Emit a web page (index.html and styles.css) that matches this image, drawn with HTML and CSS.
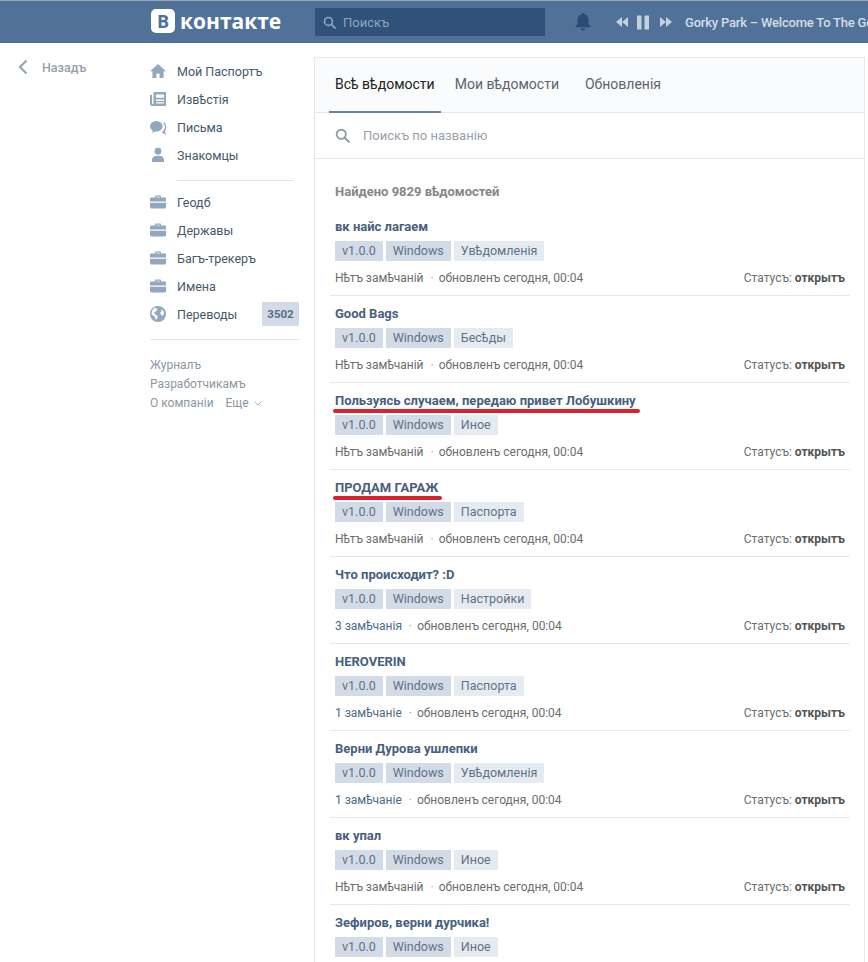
FILE: index.html
```html
<!DOCTYPE html>
<html lang="ru">
<head>
    <meta charset="UTF-8">
    <meta name="viewport" content="width=device-width, initial-scale=1.0">
    <title>Всѣ вѣдомости</title>
    <link rel="stylesheet" href="styles.css">
</head>
<body>
    <svg class="sprite" width="0" height="0">
        <symbol id="i-search" viewBox="0 0 16 16"><circle cx="6.7" cy="6.7" r="4.9" fill="none" stroke="currentColor" stroke-width="2"/><path d="M10.3 10.3l4.4 4.4" stroke="currentColor" stroke-width="2.2" stroke-linecap="round"/></symbol>
        <symbol id="i-home" viewBox="0 0 16 16"><path d="M8 1L0 8.2h2.4V15h4v-4.4h3.2V15h4V8.2H16z" fill="currentColor"/></symbol>
        <symbol id="i-news" viewBox="0 0 16 16"><path d="M3.5 1H16v14H2.500A2.500 2.500 0 0 1 0 12.500V4h2v8.400c0 .4.300.7.800.7s.7-.3.7-.7zM6 3.400v3.400h8V3.400zm0 5.200v1.300h8V8.600zm0 2.600v1.300h8v-1.300z" fill="currentColor" fill-rule="evenodd"/></symbol>
        <symbol id="i-chat" viewBox="0 0 16 16"><ellipse cx="6.300" cy="7.300" rx="6.300" ry="5.200" fill="currentColor"/><path d="M3 11l-.8 3 3.800-2z" fill="currentColor"/><path d="M13.600 3.800c2.600 2.200 2.800 5.800 .4 8l.8 2.400-2.600-1.400" fill="none" stroke="currentColor" stroke-width="1.400"/></symbol>
        <symbol id="i-user" viewBox="0 0 16 16"><circle cx="8" cy="4.200" r="3.400" fill="currentColor"/><path d="M2 15v-2.500c0-2.300 2.500-3.700 6-3.700s6 1.400 6 3.700V15z" fill="currentColor"/></symbol>
        <symbol id="i-case" viewBox="0 0 16 16"><path d="M5 3.500V2.300C5 1.800 5.400 1.500 5.900 1.500h4.200c.5 0 .9.300.9.800v1.200h3.500c.8 0 1.500.5 1.500 1.300V7.500H0V4.800C0 4 .7 3.500 1.500 3.500zm1.300 0h3.400V2.700H6.300zM0 8.700h16v4.300c0 .8-.7 1.500-1.500 1.500h-13C.7 14.500 0 13.800 0 13z" fill="currentColor" fill-rule="evenodd"/></symbol>
        <symbol id="i-globe" viewBox="0 0 16 16"><circle cx="8" cy="8" r="8" fill="currentColor"/><path d="M4.500 1.700L7.300 3 6.500 5 4 6.300 5.500 9l2.200.6-.5 3.200-1.500 1-1.200-3.400L1.500 8.200C1.700 5.500 2.700 3.200 4.500 1.700zM11 3.500l2 .8 1 3.500-1.200 2-1.800-.8-.8-2.500 1.400-1z" fill="#fff"/></symbol>
    </svg>

    <header class="topbar">
        <div class="topbar-inner">
            <a class="logo"><span class="logo-mark">В</span><span class="logo-text">контакте</span></a>
            <div class="top-search">
                <svg class="top-search-icon"><use href="#i-search"/></svg>
                <span>Поискъ</span>
            </div>
            <svg class="bell" viewBox="0 0 16 18"><path d="M8 0c.8 0 1.300.5 1.400 1.300C12 2 13.500 4.200 13.500 7v4l2 2.500v.8H.5v-.8l2-2.500V7c0-2.800 1.500-5 4.100-5.700C6.700.5 7.200 0 8 0zM5.800 15.300h4.400C10 16.800 9.100 17.500 8 17.500s-2-.7-2.200-2.200z" fill="#2a4b73"/></svg>
            <div class="player">
                <svg class="player-btn" viewBox="0 0 12 10"><path d="M6 0v10L0 5zM12 0v10L6 5z" fill="currentColor"/></svg>
                <svg class="player-pause" viewBox="0 0 12 14"><rect width="4.500" height="14" rx=".5" fill="currentColor"/><rect x="7.500" width="4.500" height="14" rx=".5" fill="currentColor"/></svg>
                <svg class="player-btn" viewBox="0 0 12 10"><path d="M0 0v10l6-5zM6 0v10l6-5z" fill="currentColor"/></svg>
                <span class="track">Gorky Park – Welcome To The Gorky Park</span>
            </div>
        </div>
    </header>

    <div class="page">
        <aside class="back">
            <svg class="back-arrow" viewBox="0 0 10 16"><path d="M8.500 1.500L2 8l6.500 6.500" fill="none" stroke="currentColor" stroke-width="2.200"/></svg>
            <span>Назадъ</span>
        </aside>

        <nav class="side">
            <a class="side-item"><svg><use href="#i-home"/></svg>Мой Паспортъ</a>
            <a class="side-item"><svg><use href="#i-news"/></svg>Извѣстія</a>
            <a class="side-item"><svg><use href="#i-chat"/></svg>Письма</a>
            <a class="side-item"><svg><use href="#i-user"/></svg>Знакомцы</a>
            <div class="side-sep side-sep-short"></div>
            <a class="side-item"><svg><use href="#i-case"/></svg>Геодб</a>
            <a class="side-item"><svg><use href="#i-case"/></svg>Державы</a>
            <a class="side-item"><svg><use href="#i-case"/></svg>Багъ-трекеръ</a>
            <a class="side-item"><svg><use href="#i-case"/></svg>Имена</a>
            <a class="side-item"><svg><use href="#i-globe"/></svg>Переводы<span class="badge">3502</span></a>
            <div class="side-sep"></div>
            <div class="side-foot">
                <a>Журналъ</a>
                <a>Разработчикамъ</a>
                <a>О компаніи <span class="more">Еще <svg viewBox="0 0 8 5"><path d="M.7.7L4 4l3.300-3.300" fill="none" stroke="currentColor"/></svg></span></a>
            </div>
        </nav>

        <main class="card">
            <div class="tabs">
                <a class="tab tab-active">Всѣ вѣдомости</a>
                <a class="tab tab-mine">Мои вѣдомости</a>
                <a class="tab">Обновленія</a>
            </div>
            <div class="filter">
                <svg><use href="#i-search"/></svg>
                <span>Поискъ по названію</span>
            </div>
            <div class="list">
                <div class="found">Найдено 9829 вѣдомостей</div>

                <div class="report">
                    <a class="report-title">вк найс лагаем</a>
                    <div class="tags"><span class="tag">v1.0.0</span><span class="tag">Windows</span><span class="tag tag-light">Увѣдомленія</span></div>
                    <div class="meta"><span>Нѣтъ замѣчаній</span><span class="dot">·</span><span>обновленъ сегодня, 00:04</span><span class="status">Статусъ: <b>открытъ</b></span></div>
                </div>
                <div class="report">
                    <a class="report-title">Good Bags</a>
                    <div class="tags"><span class="tag">v1.0.0</span><span class="tag">Windows</span><span class="tag tag-light">Бесѣды</span></div>
                    <div class="meta"><span>Нѣтъ замѣчаній</span><span class="dot">·</span><span>обновленъ сегодня, 00:04</span><span class="status">Статусъ: <b>открытъ</b></span></div>
                </div>
                <div class="report">
                    <a class="report-title marked">Пользуясь случаем, передаю привет Лобушкину</a>
                    <div class="tags"><span class="tag">v1.0.0</span><span class="tag">Windows</span><span class="tag tag-light">Иное</span></div>
                    <div class="meta"><span>Нѣтъ замѣчаній</span><span class="dot">·</span><span>обновленъ сегодня, 00:04</span><span class="status">Статусъ: <b>открытъ</b></span></div>
                </div>
                <div class="report">
                    <a class="report-title marked">ПРОДАМ ГАРАЖ</a>
                    <div class="tags"><span class="tag">v1.0.0</span><span class="tag">Windows</span><span class="tag tag-light">Паспорта</span></div>
                    <div class="meta"><span>Нѣтъ замѣчаній</span><span class="dot">·</span><span>обновленъ сегодня, 00:04</span><span class="status">Статусъ: <b>открытъ</b></span></div>
                </div>
                <div class="report">
                    <a class="report-title">Что происходит? :D</a>
                    <div class="tags"><span class="tag">v1.0.0</span><span class="tag">Windows</span><span class="tag tag-light">Настройки</span></div>
                    <div class="meta"><span class="comments">3 замѣчанія</span><span class="dot">·</span><span>обновленъ сегодня, 00:04</span><span class="status">Статусъ: <b>открытъ</b></span></div>
                </div>
                <div class="report">
                    <a class="report-title">HEROVERIN</a>
                    <div class="tags"><span class="tag">v1.0.0</span><span class="tag">Windows</span><span class="tag tag-light">Паспорта</span></div>
                    <div class="meta"><span class="comments">1 замѣчаніе</span><span class="dot">·</span><span>обновленъ сегодня, 00:04</span><span class="status">Статусъ: <b>открытъ</b></span></div>
                </div>
                <div class="report">
                    <a class="report-title">Верни Дурова ушлепки</a>
                    <div class="tags"><span class="tag">v1.0.0</span><span class="tag">Windows</span><span class="tag tag-light">Увѣдомленія</span></div>
                    <div class="meta"><span class="comments">1 замѣчаніе</span><span class="dot">·</span><span>обновленъ сегодня, 00:04</span><span class="status">Статусъ: <b>открытъ</b></span></div>
                </div>
                <div class="report">
                    <a class="report-title">вк упал</a>
                    <div class="tags"><span class="tag">v1.0.0</span><span class="tag">Windows</span><span class="tag tag-light">Иное</span></div>
                    <div class="meta"><span>Нѣтъ замѣчаній</span><span class="dot">·</span><span>обновленъ сегодня, 00:04</span><span class="status">Статусъ: <b>открытъ</b></span></div>
                </div>
                <div class="report">
                    <a class="report-title">Зефиров, верни дурчика!</a>
                    <div class="tags"><span class="tag">v1.0.0</span><span class="tag">Windows</span><span class="tag tag-light">Иное</span></div>
                </div>
            </div>
        </main>
    </div>
</body>
</html>
```

FILE: styles.css
```css
html, body {
    height: 962px;
    overflow: hidden;
}
body {
    margin: 0;
    background-color: #fff;
    font-family: Roboto, "Liberation Sans", sans-serif;
    font-size: 13px;
    color: #656565;
}
.sprite {
    position: absolute;
}

/* top bar */
.topbar {
    height: 42px;
    background-color: #507299;
    border-top: 1px solid #9aa6b6;
    overflow: hidden;
}
.topbar-inner {
    display: flex;
    align-items: center;
    height: 42px;
    padding-left: 151px;
    white-space: nowrap;
}
.topbar-inner > * {
    flex: none;
}
.logo {
    display: flex;
    align-items: center;
    width: 164px;
    margin-top: -3px;
}
.logo-mark {
    width: 24px;
    height: 24px;
    margin-right: 5px;
    background-color: #fff;
    border-radius: 5px;
    color: #507299;
    font: bold 18px/24px "Open Sans", sans-serif;
    text-align: center;
}
.logo-text {
    font: bold 21px/24px "Open Sans", sans-serif;
    color: #fff;
}
.top-search {
    display: flex;
    align-items: center;
    width: 230px;
    height: 28px;
    background-color: #30527a;
    color: #8fa5be;
}
.top-search-icon {
    width: 13px;
    height: 13px;
    margin: 0 7px 0 8px;
    color: #8fa5be;
}
.bell {
    width: 16px;
    height: 18px;
    margin-left: 30px;
}
.player {
    display: flex;
    align-items: center;
    margin-left: 25px;
    color: #c5d0de;
}
.player-btn {
    width: 12px;
    height: 10px;
}
.player-pause {
    width: 12px;
    height: 15px;
    margin: 0 11px 0 9px;
}
.track {
    margin-left: 13px;
    font-size: 13px;
    font-weight: 500;
    letter-spacing: -.2px;
    color: #d3dce7;
}

/* page columns */
.page {
    display: flex;
    align-items: flex-start;
}
.back {
    display: flex;
    align-items: center;
    width: 150px;
    padding-top: 16px;
    box-sizing: border-box;
    padding-left: 18px;
    font-size: 12.5px;
    font-weight: 500;
    color: #939fae;
}
.back-arrow {
    width: 10px;
    height: 16px;
    margin-right: 14px;
    color: #99a6b6;
}

/* left menu */
.side {
    width: 149px;
    margin-right: 15px;
    padding-top: 14px;
}
.side-item {
    display: flex;
    align-items: center;
    height: 28px;
    font-size: 12.5px;
    color: #47586c;
}
.side-item svg {
    width: 16px;
    height: 16px;
    margin-right: 11px;
    color: #93a7bd;
}
.badge {
    margin-left: auto;
    width: 37px;
    height: 24px;
    background-color: #d3dbe6;
    color: #5a6d84;
    font-size: 11.5px;
    font-weight: bold;
    line-height: 24px;
    text-align: center;
}
.side-sep {
    height: 1px;
    margin: 11px 0 16px;
    background-color: #e1e5eb;
}
.side-sep-short {
    margin: 11px 5px 7px 27px;
}
.side-foot {
    font-size: 12px;
    line-height: 19px;
    color: #8d97a3;
}
.side-foot a {
    display: block;
}
.more {
    margin-left: 9px;
}
.more svg {
    width: 8px;
    height: 5px;
    margin-left: 2px;
    vertical-align: 1px;
    color: #a9b4c0;
}

/* main card */
.card {
    width: 551px;
    height: 905px;
    box-sizing: border-box;
    border: 1px solid #e7e8ec;
    border-bottom: none;
    margin-top: 14px;
    overflow: hidden;
}
.tabs {
    display: flex;
    height: 55px;
    padding-left: 14px;
    background-color: #fafbfc;
    border-bottom: 1px solid #e7e8ec;
    box-sizing: border-box;
    font-size: 14px;
    color: #5a6470;
}
.tab {
    padding: 0 6px;
    margin-right: 8px;
    line-height: 52px;
    white-space: nowrap;
}
.tab-mine {
    margin-right: 14px;
}
.tab-active {
    color: #222;
    height: 55px;
    box-sizing: border-box;
    border-bottom: 2px solid #67849f;
}
.filter {
    display: flex;
    align-items: center;
    height: 45px;
    padding-left: 20px;
    border-bottom: 1px solid #e7e8ec;
    color: #9aa0a8;
}
.filter svg {
    width: 15px;
    height: 15px;
    margin-right: 13px;
    color: #8f9daa;
}
.list {
    padding: 0 14px 0 15px;
}
.found {
    padding: 25px 5px 0;
    font-weight: bold;
    line-height: 16px;
    color: #878787;
}

/* one report */
.report {
    height: 86px;
    padding: 0 5px;
    border-bottom: 1px solid #e7e8ec;
}
.found + .report {
    margin-top: 18px;
    height: 77px;
}
.report-title {
    display: block;
    padding-top: 10px;
    line-height: 16px;
    font-weight: bold;
    color: #47607e;
}
.found + .report .report-title {
    padding-top: 1px;
}
.report:last-child {
    border-bottom: none;
}
.marked {
    position: relative;
    width: fit-content;
}
.marked::after {
    content: "";
    position: absolute;
    left: -2px;
    right: -4px;
    top: 26px;
    height: 4px;
    border-radius: 2px;
    background-color: #d8222e;
}
.tags {
    display: flex;
    gap: 3px;
    margin-top: 6px;
}
.tag {
    height: 20px;
    padding: 0 7px;
    background-color: #d3dbe6;
    font-size: 12.5px;
    line-height: 20px;
    color: #5f7286;
}
.tag-light {
    background-color: #e5ebf1;
}
.meta {
    display: flex;
    margin-top: 9px;
    font-size: 12px;
    line-height: 16px;
    color: #6d6d6d;
}
.comments {
    color: #4d6a86;
}
.dot {
    margin: 0 5px 0 7px;
    color: #9aa0a8;
}
.status {
    margin-left: auto;
}
.status b {
    color: #555;
}
```
